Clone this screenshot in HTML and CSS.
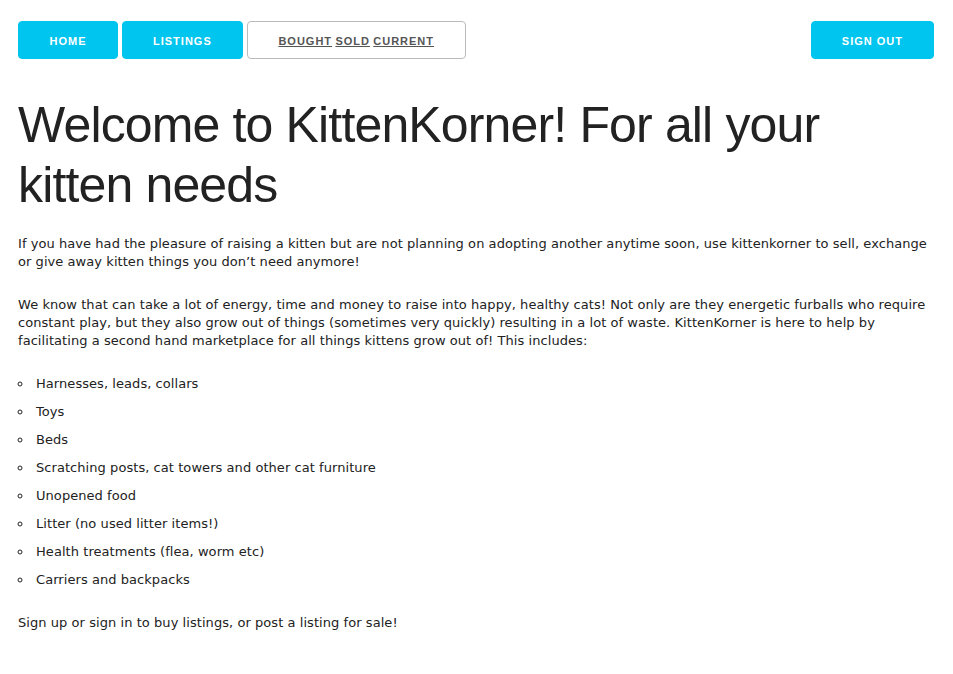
FILE: index.html
```html
<!DOCTYPE html>
<html>
<head>
<meta charset="utf-8">
<link rel="stylesheet" href="styles.css">
</head>
<body>
<div class="page">
  <nav class="nav">
    <div class="nav-left">
      <a class="btn btn-primary btn-home" href="#">Home</a>
      <a class="btn btn-primary" href="#">Listings</a>
      <span class="btn btn-outline"><a href="#">Bought</a> <a href="#">Sold</a> <a href="#">Current</a></span>
    </div>
    <a class="btn btn-primary" href="#">Sign out</a>
  </nav>
  <h1 class="title">Welcome to KittenKorner! For all your kitten needs</h1>
  <p>If you have had the pleasure of raising a kitten but are not planning on adopting another anytime soon, use kittenkorner to sell, exchange or give away kitten things you don’t need anymore!</p>
  <p>We know that can take a lot of energy, time and money to raise into happy, healthy cats! Not only are they energetic furballs who require constant play, but they also grow out of things (sometimes very quickly) resulting in a lot of waste. KittenKorner is here to help by facilitating a second hand marketplace for all things kittens grow out of! This includes:</p>
  <ul class="items">
    <li>Harnesses, leads, collars</li>
    <li>Toys</li>
    <li>Beds</li>
    <li>Scratching posts, cat towers and other cat furniture</li>
    <li>Unopened food</li>
    <li>Litter (no used litter items!)</li>
    <li>Health treatments (flea, worm etc)</li>
    <li>Carriers and backpacks</li>
  </ul>
  <p>Sign up or sign in to buy listings, or post a listing for sale!</p>
</div>
</body>
</html>
```
FILE: styles.css
```css
html, body {
  margin: 0;
  padding: 0;
  background: #fff;
}
body {
  font-family: "DejaVu Sans", Verdana, sans-serif;
  font-size: 13px;
  line-height: 18px;
  letter-spacing: 0.06px;
  color: #222;
}
.page {
  padding: 21px 19px 20px 18px;
}
.nav {
  display: flex;
  justify-content: space-between;
  align-items: center;
}
.nav-left {
  display: flex;
  gap: 4px;
}
.btn {
  display: inline-flex;
  align-items: center;
  justify-content: center;
  box-sizing: border-box;
  height: 38px;
  padding: 2px 30px 0;
  border-radius: 4px;
  font-family: "Liberation Sans", Arial, sans-serif;
  font-size: 11px;
  font-weight: 700;
  letter-spacing: 1px;
  text-transform: uppercase;
  text-decoration: none;
  white-space: nowrap;
}
.btn-home {
  min-width: 100px;
}
.btn-primary {
  background: #00c5ee;
  color: #fff;
  border: 1px solid #00c5ee;
}
.btn-outline {
  background: #fff;
  border: 1px solid #bbb;
  color: #555;
  width: 219px;
  gap: 0.3em;
}
.btn-outline a {
  color: #555;
  text-decoration: underline;
}
.title {
  font-family: "Liberation Sans", Arial, sans-serif;
  font-weight: 400;
  font-size: 50px;
  line-height: 60px;
  letter-spacing: -0.85px;
  color: #222;
  margin: 36px 0 20px;
}
p {
  margin: 0 0 25px;
}
.items {
  list-style: circle inside;
  padding: 0;
  margin: 0 0 25px;
}
.items li {
  margin-bottom: 10px;
}
```
